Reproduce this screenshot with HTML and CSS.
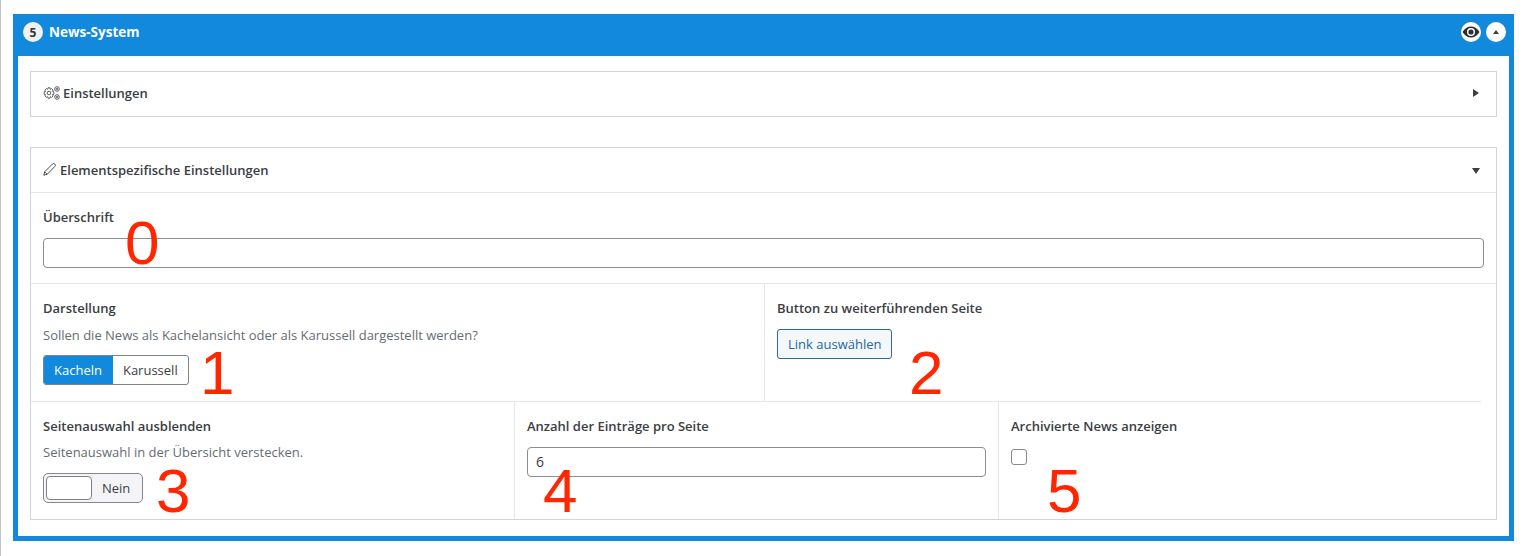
FILE: index.html
```html
<!DOCTYPE html>
<html lang="de">
<head>
<meta charset="utf-8">
<title>News-System</title>
<link rel="stylesheet" href="styles.css">
</head>
<body>
<section class="module">
  <header class="module-head">
    <span class="badge">5</span>
    <span class="module-title">News-System</span>
    <span class="head-actions">
      <span class="round-btn">
        <svg width="18" height="12" viewBox="0 0 18 12"><path d="M0.5 6C3 2 5.8 0.4 9 0.4S15 2 17.5 6C15 10 12.2 11.6 9 11.6S3 10 0.5 6Z" fill="#2b2f33"/><circle cx="9" cy="6" r="4" fill="#fff"/><circle cx="9" cy="6" r="2.6" fill="#2b2f33"/></svg>
      </span>
      <span class="round-btn"><span class="tri-up"></span></span>
    </span>
  </header>
  <div class="module-body">
    <div class="panel panel-closed">
      <div class="panel-head panel-head-closed">
        <svg class="ico-gears" width="17" height="14" viewBox="0 0 17 14" fill="none" stroke="#4a5056" stroke-width="0.9"><circle cx="6" cy="7" r="1.8"/><path d="M5 1.8h2l.3 1.5 1.3-.7 1.5 1.5-.7 1.3 1.4.3v2.6l-1.4.3.7 1.3-1.5 1.5-1.3-.7-.3 1.5H5l-.3-1.5-1.3.7-1.5-1.5.7-1.3-1.4-.3V5.7l1.4-.3-.7-1.3 1.5-1.5 1.3.7Z"/><circle cx="14" cy="3" r="2.3"/><circle cx="14" cy="3" r="0.8"/><circle cx="14" cy="11" r="2.3"/><circle cx="14" cy="11" r="0.8"/></svg>
        <span class="panel-title">Einstellungen</span>
        <span class="tri-right"></span>
      </div>
    </div>
    <div class="panel panel-open">
      <div class="panel-head panel-head-open">
        <svg class="ico-pen" width="13" height="13" viewBox="0 0 13 13" fill="none" stroke="#4a5056" stroke-width="1"><path d="M0.8 12.2l.9-3.4L9.4 1.1a1.5 1.5 0 0 1 2.4 2.4L4.2 11.3Z"/><path d="M1.7 8.8l2.5 2.5"/></svg>
        <span class="panel-title panel-title-open">Elementspezifische Einstellungen</span>
        <span class="tri-down"></span>
      </div>
      <div class="field-full">
        <label class="label">Überschrift</label>
        <input class="input" type="text">
        <span class="mark mark-0">0</span>
      </div>
      <div class="row row-two">
        <div class="cell cell-split">
          <div class="label">Darstellung</div>
          <p class="hint">Sollen die News als Kachelansicht oder als Karussell dargestellt werden?</p>
          <div class="seg">
            <span class="seg-item seg-active">Kacheln</span>
            <span class="seg-item">Karussell</span>
          </div>
          <span class="mark mark-1">1</span>
        </div>
        <div class="cell">
          <div class="label">Button zu weiterführenden Seite</div>
          <button class="link-btn" type="button">Link auswählen</button>
          <span class="mark mark-2">2</span>
        </div>
      </div>
      <div class="row row-three">
        <div class="cell cell-split">
          <div class="label">Seitenauswahl ausblenden</div>
          <p class="hint hint-tight">Seitenauswahl in der Übersicht verstecken.</p>
          <div class="toggle"><span class="toggle-knob"></span><span class="toggle-text">Nein</span></div>
          <span class="mark mark-3">3</span>
        </div>
        <div class="cell cell-split">
          <div class="label">Anzahl der Einträge pro Seite</div>
          <input class="input input-num" type="text" value="6">
          <span class="mark mark-4">4</span>
        </div>
        <div class="cell">
          <div class="label">Archivierte News anzeigen</div>
          <span class="check"></span>
          <span class="mark mark-5">5</span>
        </div>
      </div>
    </div>
  </div>
</section>
</body>
</html>
```
FILE: styles.css
```css
* { box-sizing: border-box; }
html, body { height: 100%; }
body {
  margin: 0;
  padding: 14px 12px 15px 12px;
  background: #fff;
  font-family: "Open Sans", "Noto Sans", sans-serif;
  font-size: 13px;
  color: #383c41;
  overflow: hidden;
  border-left: 1px solid #c4c4c4;
}
.module { border: 5px solid #1289dc; border-top: 0; height: 527px; }
.module-head {
  height: 42px;
  margin: 0 -5px;
  padding: 0 8px 6px 10px;
  background: #1289dc;
  display: flex;
  align-items: center;
  color: #fff;
}
.badge {
  width: 20px; height: 20px; border-radius: 50%;
  background: #f2f2f4; color: #33373b;
  font-size: 12px; font-weight: 700;
  display: flex; align-items: center; justify-content: center;
}
.module-title { margin-left: 6px; font-size: 13.5px; font-weight: 700; }
.head-actions { margin-left: auto; display: flex; gap: 5px; }
.round-btn {
  width: 20px; height: 20px; border-radius: 50%;
  background: #fff;
  display: flex; align-items: center; justify-content: center;
}
.tri-up { width: 0; height: 0; border: 3px solid transparent; border-top: 0; border-bottom: 4px solid #3b3f44; }
.module-body { padding: 15px 12px 0 12px; }
.panel { border: 1px solid #d4d5d7; }
.panel-closed { height: 46px; }
.panel-open { height: 373px; margin-top: 30px; }
.panel-head {
  height: 45px;
  display: flex;
  align-items: center;
  padding: 0 17px 0 12px;
}
.panel-head-closed { height: 42px; }
.panel-head-open { height: 45px; padding-bottom: 1px; border-bottom: 1px solid #e6e7e8; }
.panel-title { font-weight: 600; color: #3a3e43; font-size: 13px; margin-left: 3px; }
.panel-title-open { margin-left: 4px; }
.ico-gears { flex: none; }
.ico-pen { flex: none; }
.tri-right { margin-left: auto; width: 0; height: 0; border: 4px solid transparent; border-right: 0; border-left: 6px solid #3b3f44; }
.tri-down { margin-left: auto; width: 0; height: 0; border: 4px solid transparent; border-bottom: 0; border-top: 6px solid #3b3f44; margin-right: -1px; margin-top: 3px; }
.label { display: block; font-weight: 600; font-size: 13px; line-height: 17px; color: #3a3e43; }
.field-full {
  position: relative;
  height: 91px;
  padding: 16px 12px 0;
  border-bottom: 1px solid #e6e7e8;
}
.input {
  display: block;
  width: 100%;
  height: 30px;
  margin: 12px 0 0;
  padding: 0 8px 2px;
  border: 1px solid #8a8d91;
  border-radius: 4px;
  background: #fff;
  font: 14px "Open Sans", sans-serif;
  color: #383c41;
  outline: 0;
}
.row { display: flex; }
.row-two { height: 118px; margin-right: 15px; border-bottom: 1px solid #e6e7e8; }
.row-two .cell { height: 117px; }
.row-two .cell:first-child { width: 734px; flex: none; }
.row-three { height: 117px; }
.row-three .cell { width: 484px; flex: none; }
.cell { position: relative; flex: 1; padding: 16px 12px 0; }
.cell-split { border-right: 1px solid #e6e7e8; }
.hint { margin: 10px 0 0; font-size: 13px; line-height: 17px; color: #666c73; }
.hint-tight { margin-top: 9px; }
.seg {
  display: inline-flex;
  height: 30px;
  margin-top: 11px;
  border: 1px solid #7f8286;
  border-radius: 3px;
  overflow: hidden;
  font-size: 13px;
}
.seg-item { display: flex; align-items: center; padding: 0 10px; color: #3a3e43; }
.seg-active { background: #1289dc; color: #fff; padding: 0 11px; margin: -1px 0 -1px -1px; }
.link-btn {
  display: block;
  height: 30px;
  margin-top: 12px;
  padding: 0 10px;
  border: 1px solid #2a6b99;
  border-radius: 3px;
  background: #f5f8fa;
  color: #22689e;
  font: 13px "Open Sans", sans-serif;
}
.toggle {
  display: flex; align-items: center;
  width: 100px; height: 30px;
  margin-top: 12px;
  padding: 2px;
  border: 1px solid #85888c;
  border-radius: 5px;
  background: #f4f4f6;
}
.toggle-knob { width: 46px; height: 24px; background: #fff; border: 1px solid #7f8286; border-radius: 4px; }
.toggle-text { margin-left: 10px; font-size: 13px; color: #3a3e43; }
.input-num { margin-top: 12px; }
.check {
  display: block; width: 16px; height: 16px;
  margin-top: 14px;
  border: 1px solid #85888c;
  border-radius: 3px;
}
.mark {
  position: absolute;
  font-family: "Liberation Sans", Arial, sans-serif;
  font-size: 62px;
  line-height: 60px;
  color: #ff2600;
}
.mark-0 { left: 94px; top: 20px; }
.mark-1 { left: 169px; top: 59px; }
.mark-2 { left: 144px; top: 59px; }
.mark-3 { left: 125px; top: 59px; }
.mark-4 { left: 28px; top: 59px; }
.mark-5 { left: 48px; top: 59px; }
```
